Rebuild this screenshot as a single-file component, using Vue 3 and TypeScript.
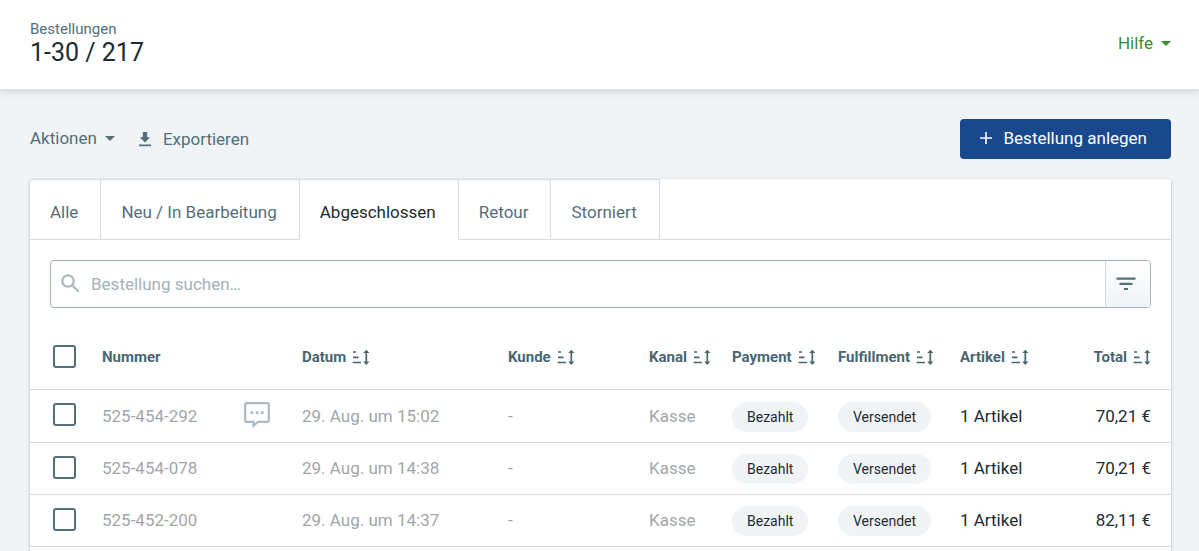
<script setup lang="ts">
import { ref } from 'vue'

interface Order {
  number: string
  comment: boolean
  date: string
  customer: string
  channel: string
  payment: string
  fulfillment: string
  items: string
  total: string
}

interface Column {
  key: string
  label: string
  sortable: boolean
}

const tabs: string[] = ['Alle', 'Neu / In Bearbeitung', 'Abgeschlossen', 'Retour', 'Storniert']
const activeTab = ref<string>('Abgeschlossen')
const query = ref<string>('')
const selected = ref<string[]>([])

const columns: Column[] = [
  { key: 'number', label: 'Nummer', sortable: false },
  { key: 'date', label: 'Datum', sortable: true },
  { key: 'customer', label: 'Kunde', sortable: true },
  { key: 'channel', label: 'Kanal', sortable: true },
  { key: 'payment', label: 'Payment', sortable: true },
  { key: 'fulfillment', label: 'Fulfillment', sortable: true },
  { key: 'items', label: 'Artikel', sortable: true },
  { key: 'total', label: 'Total', sortable: true },
]

const base = {
  customer: '-',
  channel: 'Kasse',
  payment: 'Bezahlt',
  fulfillment: 'Versendet',
  items: '1 Artikel',
}

const orders: Order[] = [
  { ...base, number: '525-454-292', comment: true, date: '29. Aug. um 15:02', total: '70,21 €' },
  { ...base, number: '525-454-078', comment: false, date: '29. Aug. um 14:38', total: '70,21 €' },
  { ...base, number: '525-452-200', comment: false, date: '29. Aug. um 14:37', total: '82,11 €' },
]

function toggleAll(event: Event): void {
  const checked = (event.target as HTMLInputElement).checked
  selected.value = checked ? orders.map((order) => order.number) : []
}
</script>

<template>
  <div class="page">
    <header class="topbar">
      <div>
        <div class="crumb">Bestellungen</div>
        <h1 class="title">1-30 / 217</h1>
      </div>
      <button type="button" class="link help">
        Hilfe
        <svg class="caret" width="10" height="5" viewBox="0 0 10 5" aria-hidden="true"><path d="M0 0h10L5 5z" /></svg>
      </button>
    </header>

    <main class="content">
      <div class="toolbar">
        <button type="button" class="link">
          Aktionen
          <svg class="caret" width="10" height="5" viewBox="0 0 10 5" aria-hidden="true"><path d="M0 0h10L5 5z" /></svg>
        </button>
        <button type="button" class="link export">
          <svg width="12" height="15" viewBox="0 0 12 15" aria-hidden="true">
            <path d="M3.8 0h4.4v5.2h3L6 10.6.8 5.2h3zM0 12.6h12v1.7H0z" />
          </svg>
          Exportieren
        </button>
        <button type="button" class="primary">
          <svg width="12" height="12" viewBox="0 0 12 12" aria-hidden="true"><path d="M5.200 0h1.600v5.200H12v1.600H6.800V12H5.200V6.800H0V5.200h5.200z" /></svg>
          Bestellung anlegen
        </button>
      </div>

      <section class="card">
        <nav class="tabs">
          <button
            v-for="tab in tabs"
            :key="tab"
            type="button"
            class="tab"
            :class="{ active: tab === activeTab }"
            @click="activeTab = tab"
          >
            {{ tab }}
          </button>
          <span class="rest"></span>
        </nav>

        <form class="search" @submit.prevent>
          <svg class="lens" width="20" height="20" viewBox="0 0 20 20" aria-hidden="true">
            <circle cx="7" cy="7" r="5.700" />
            <path d="M11.200 11.200l6.600 6.600" />
          </svg>
          <input v-model="query" type="text" aria-label="Bestellung suchen" placeholder="Bestellung suchen…" />
          <button type="button" class="filter" aria-label="Filter">
            <svg width="20" height="14" viewBox="0 0 20 14" aria-hidden="true">
              <path d="M.5.500h19v2.200H.5zM3.500 5.700h13v2.200h-13zM8 10.900h4v2.200H8z" />
            </svg>
          </button>
        </form>

        <table class="orders">
          <colgroup>
            <col class="c-check" />
            <col class="c-number" />
            <col class="c-date" />
            <col />
            <col class="c-channel" />
            <col class="c-payment" />
            <col class="c-fulfillment" />
            <col class="c-items" />
            <col class="c-total" />
          </colgroup>
          <thead>
            <tr>
              <th class="check">
                <input
                  type="checkbox"
                  aria-label="Alle auswählen"
                  :checked="selected.length === orders.length"
                  @change="toggleAll"
                />
              </th>
              <th v-for="col in columns" :key="col.key" :class="{ right: col.key === 'total' }">
                <button v-if="col.sortable" type="button" class="sort">
                  {{ col.label }}
                  <svg width="18" height="16" viewBox="0 0 18 16" aria-hidden="true">
                    <path d="M1 3h3M1 8.300h5.500M.6 13.500h8.400M14.300 3v10.500" class="line" />
                    <path d="M14.300.7l3.100 3.300h-6.200zM14.300 15.900l3.100-3.300h-6.200z" />
                  </svg>
                </button>
                <template v-else>{{ col.label }}</template>
              </th>
            </tr>
          </thead>
          <tbody>
            <tr v-for="order in orders" :key="order.number">
              <td class="check">
                <input v-model="selected" type="checkbox" :value="order.number" :aria-label="order.number" />
              </td>
              <td class="muted">
                <div class="number">
                  {{ order.number }}
                  <svg v-if="order.comment" width="26" height="26" viewBox="0 0 26 26" role="img" aria-label="Kommentar">
                    <path
                      class="bubble"
                      d="M2.500 1.200h21a1.300 1.300 0 0 1 1.300 1.300v16a1.300 1.300 0 0 1-1.300 1.300H14l-4.500 4v-4h-7a1.300 1.300 0 0 1-1.300-1.300v-16a1.300 1.300 0 0 1 1.300-1.300z"
                    />
                    <path d="M6.500 9.300h2.700V12H6.500zM11.700 9.300h2.700V12h-2.700zM16.900 9.300h2.700V12h-2.700z" />
                  </svg>
                </div>
              </td>
              <td class="muted">{{ order.date }}</td>
              <td class="muted">{{ order.customer }}</td>
              <td class="muted">{{ order.channel }}</td>
              <td class="status"><span class="pill">{{ order.payment }}</span></td>
              <td class="status"><span class="pill">{{ order.fulfillment }}</span></td>
              <td>{{ order.items }}</td>
              <td class="right">{{ order.total }}</td>
            </tr>
          </tbody>
        </table>
      </section>
    </main>
  </div>
</template>

<style>
body {
  margin: 0;
}
</style>

<style scoped>
.page {
  display: flex;
  flex-direction: column;
  min-height: 100vh;
  background: #f0f4f7;
  color: #212b31;
  font-family: Roboto, 'Liberation Sans', sans-serif;
  font-size: 17px;
  line-height: 24px;
}

.page * {
  box-sizing: border-box;
}

button,
input {
  font: inherit;
  color: inherit;
}

button {
  padding: 0;
  border: 0;
  background: none;
  cursor: pointer;
}

svg {
  flex: none;
  fill: currentColor;
}

.topbar {
  display: flex;
  align-items: center;
  justify-content: space-between;
  padding: 20px 28px 21px 30px;
  background: #fff;
  box-shadow: 0 2px 8px rgba(40, 50, 60, 0.18);
}

.crumb {
  color: #546e7a;
  font-size: 15px;
  line-height: 18px;
}

.title {
  margin: 0;
  font-size: 25px;
  font-weight: 400;
  line-height: 30px;
}

.link {
  display: flex;
  align-items: center;
  gap: 8px;
  padding-bottom: 2px;
  color: #546e7a;
}

.help {
  color: #388e2c;
}

.content {
  display: flex;
  flex: 1;
  flex-direction: column;
  gap: 20px;
  padding: 30px 28px 0 30px;
}

.toolbar {
  display: flex;
  align-items: center;
  gap: 24px;
}

.export {
  gap: 12px;
  padding-bottom: 0;
}

.primary {
  display: flex;
  align-items: center;
  gap: 12px;
  height: 40px;
  margin-left: auto;
  padding: 0 24px 2px 20px;
  border-radius: 4px;
  background: #19488c;
  color: #fff;
}

.card {
  flex: 1;
  border-radius: 3px 3px 0 0;
  background: #fff;
  box-shadow: 0 1px 3px rgba(0, 0, 0, 0.3);
}

.tabs {
  display: flex;
}

.tab {
  height: 61px;
  padding: 5px 22px 0 20px;
  border: solid #d9dcde;
  border-width: 1px 1px 1px 0;
  color: #546e7a;
}

.tab:first-child {
  border-top-left-radius: 3px;
}

.tab.active {
  border-bottom-color: transparent;
  color: #212b31;
}

.rest {
  flex: 1;
  border-bottom: 1px solid #d9dcde;
}

.search {
  display: flex;
  align-items: center;
  height: 48px;
  margin: 20px 20px 0;
  border: 1px solid #a4b4bc;
  border-radius: 4px;
}

.lens {
  margin-left: 10px;
  fill: none;
  stroke: #a9b7be;
  stroke-width: 2.2;
}

.search input {
  flex: 1;
  min-width: 0;
  height: 100%;
  padding: 0 10px;
  border: 0;
  outline: 0;
  background: none;
}

.search input::placeholder {
  color: #a3b0b7;
  opacity: 1;
}

.filter {
  display: flex;
  align-items: center;
  justify-content: center;
  width: 45px;
  height: 100%;
  padding-right: 4px;
  border-left: 1px solid #d3d9dd;
  border-radius: 0 3px 3px 0;
  background: linear-gradient(#fff, #eff3f6);
  color: #546e7a;
}

.orders {
  width: 100%;
  margin-top: 17px;
  border-collapse: collapse;
  table-layout: fixed;
}

.c-check { width: 72px; }
.c-number { width: 200px; }
.c-date { width: 206px; }
.c-channel { width: 83px; }
.c-payment { width: 106px; }
.c-fulfillment { width: 122px; }
.c-items { width: 111px; }
.c-total { width: 100px; }

th,
td {
  height: 52px;
  padding: 0;
  border-bottom: 1px solid #d9dcde;
  text-align: left;
  vertical-align: middle;
  white-space: nowrap;
}

tbody tr:first-child td {
  height: 53px;
}

th {
  height: 64px;
  color: #4a6572;
  font-size: 15px;
  font-weight: 700;
}

th.right,
td.right {
  padding-right: 20px;
  text-align: right;
}

.sort {
  display: inline-flex;
  align-items: center;
  gap: 6px;
  font-weight: 700;
}

.line {
  fill: none;
  stroke: currentColor;
  stroke-width: 1.7;
}

.check {
  padding-left: 23px;
}

td.check {
  padding-bottom: 2px;
}

.check input {
  display: block;
  width: 23px;
  height: 23px;
  margin: 0;
  appearance: none;
  border: 2px solid #546e7a;
  border-radius: 3px;
  background: #fff;
}

.check input:checked {
  background: #546e7a;
  box-shadow: inset 0 0 0 3px #fff;
}

.muted {
  color: #a2a6a9;
}

.number {
  display: flex;
  align-items: center;
  justify-content: space-between;
  padding-right: 32px;
}

.bubble {
  fill: none;
  stroke: currentColor;
  stroke-width: 2.2;
}

.number svg {
  margin-bottom: 2px;
  color: #abbac3;
}

.status {
  padding-top: 2px;
}

.pill {
  display: block;
  width: max-content;
  padding: 0 15px;
  border-radius: 15px;
  background: #f0f4f7;
  font-size: 14px;
  line-height: 30px;
}
</style>
